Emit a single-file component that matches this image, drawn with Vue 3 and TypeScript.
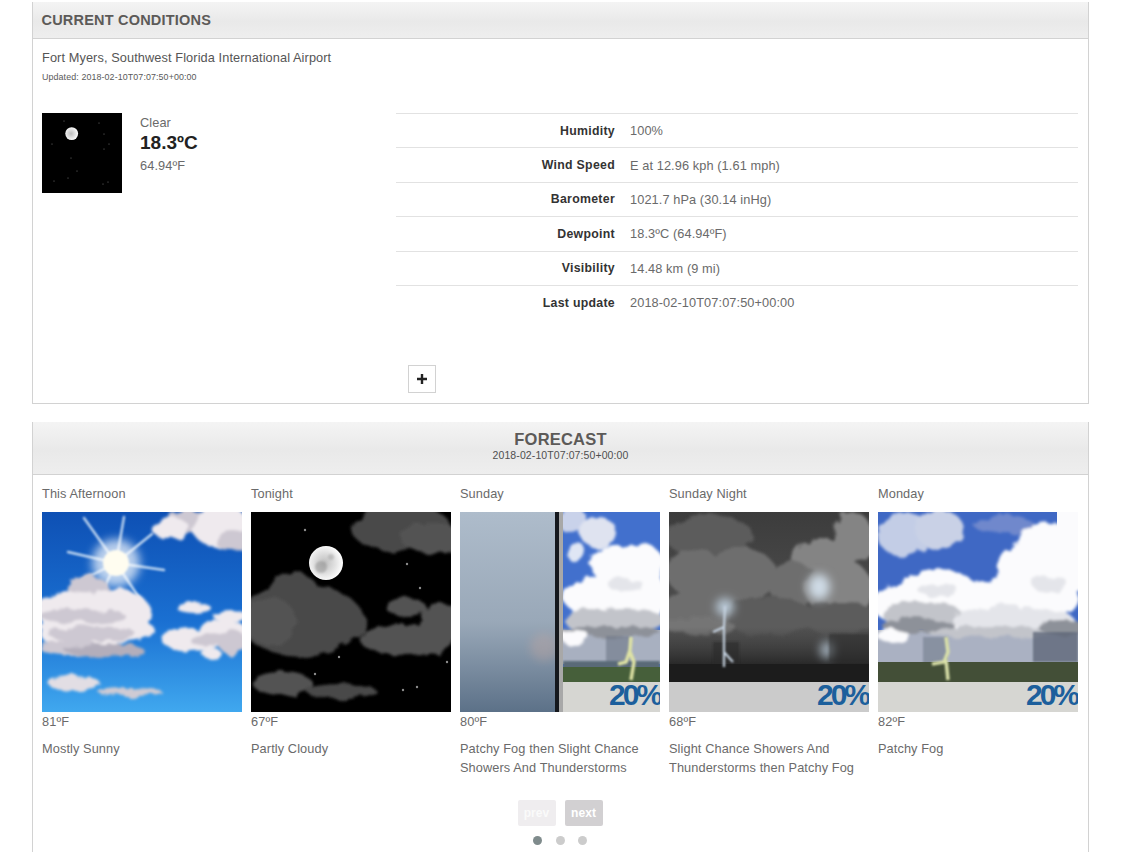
<script setup lang="ts">
type B = [number, number, number, number, string]

const rows = [
  ['Humidity', '100%'],
  ['Wind Speed', 'E at 12.96 kph (1.61 mph)'],
  ['Barometer', '1021.7 hPa (30.14 inHg)'],
  ['Dewpoint', '18.3ºC (64.94ºF)'],
  ['Visibility', '14.48 km (9 mi)'],
  ['Last update', '2018-02-10T07:07:50+00:00'],
]

const forecast = [
  { day: 'This Afternoon', temp: '81ºF', text: 'Mostly Sunny' },
  { day: 'Tonight', temp: '67ºF', text: 'Partly Cloudy' },
  { day: 'Sunday', temp: '80ºF', text: 'Patchy Fog then Slight Chance Showers And Thunderstorms' },
  { day: 'Sunday Night', temp: '68ºF', text: 'Slight Chance Showers And Thunderstorms then Patchy Fog' },
  { day: 'Monday', temp: '82ºF', text: 'Patchy Fog' },
]

const W = '#efeaee'
const G = '#cdc8d2'
const D = '#b3aebb'
const sunny: B[] = [
  [150, 10, 30, 12, G], [178, 14, 28, 22, W], [128, 16, 18, 12, W], [190, 28, 18, 10, G],
  [46, 76, 20, 13, G], [30, 100, 34, 20, W], [72, 100, 36, 24, W], [42, 120, 44, 20, W],
  [86, 118, 26, 12, W], [40, 104, 44, 7, G], [28, 136, 30, 8, G], [62, 138, 40, 6, D], [50, 122, 44, 8, G],
  [152, 96, 17, 5, W], [188, 104, 17, 6, W], [150, 128, 30, 12, W], [180, 122, 28, 14, W],
  [168, 128, 20, 6, G], [170, 142, 10, 5, W], [190, 130, 14, 12, G], [32, 171, 26, 7, '#e2dee4'], [88, 180, 32, 4, '#cfcbd4'],
]
const K = '#484848'
const L = '#525252'
const night: B[] = [
  [150, 16, 50, 24, K], [180, 26, 30, 16, L], [42, 78, 24, 18, K], [50, 108, 62, 36, K],
  [20, 110, 26, 24, L], [92, 112, 24, 18, K], [155, 95, 20, 9, L], [155, 128, 46, 16, L],
  [190, 104, 20, 12, L], [185, 120, 22, 12, L], [32, 172, 30, 11, L], [90, 179, 35, 7, K],
]
const nightStars: [number, number][] = [
  [54, 18], [156, 52], [169, 76], [88, 145], [64, 162], [152, 178], [166, 175], [196, 150],
]
const smallStars: [number, number][] = [
  [22, 8], [57, 10], [62, 21], [10, 31], [67, 31], [62, 36], [29, 45], [35, 58], [12, 68], [26, 65], [61, 71], [66, 69],
]
const sW = '#fbfbfd'
const sL = '#e4e5ea'
const sG = '#c2c4ca'
const sD = '#8d9199'
const stormDay: B[] = [
  [25, 22, 26, 22, '#c3cde6'], [62, 18, 24, 20, '#c9d1e6'], [125, 12, 30, 10, '#6f88cc'], [172, 50, 42, 40, sW], [148, 55, 26, 22, sW],
  [60, 88, 46, 30, sW], [18, 92, 24, 18, sW], [105, 90, 30, 22, sW], [150, 85, 50, 26, sW],
  [172, 72, 18, 8, sL], [60, 78, 20, 7, sL], [125, 96, 16, 6, sL],
  [45, 104, 40, 14, sG], [110, 108, 36, 12, sL], [150, 108, 46, 12, sL], [40, 114, 36, 8, sD], [120, 120, 70, 6, sG], [185, 116, 24, 8, sD],
  [15, 124, 16, 7, sW],
]
const leftStorm: B[] = [
  [112, 8, 14, 14, '#c9d2ea'], [138, 20, 18, 16, '#dfe3f0'], [116, 40, 10, 10, '#dfe6f4'], [180, 55, 24, 24, sW], [152, 52, 22, 18, sW],
  [150, 88, 42, 26, sW], [120, 84, 18, 14, sW], [190, 85, 18, 20, sW], [165, 72, 18, 6, sL], [165, 108, 40, 12, sG], [130, 108, 26, 12, sG], [150, 120, 50, 6, sD], [116, 126, 14, 8, sW],
]
const nC = '#6e6e6e'
const nL = '#848484'
const nD = '#5c5c5c'
const stormNight: B[] = [
  [40, 24, 44, 22, nD], [25, 60, 28, 24, nC], [70, 62, 38, 26, nC], [184, 26, 20, 26, nL], [152, 48, 28, 22, nL],
  [125, 72, 26, 22, nC], [170, 76, 34, 28, nL], [36, 100, 42, 24, nC], [100, 104, 44, 20, nD], [170, 106, 40, 16, nD],
  [30, 114, 36, 8, '#747474'],
]
</script>

<template>
  <main class="page">
    <svg class="defs" width="0" height="0" aria-hidden="true">
      <defs>
        <filter id="rag" x="-10%" y="-10%" width="120%" height="120%">
          <feTurbulence type="fractalNoise" baseFrequency="0.06" numOctaves="3" seed="4" />
          <feDisplacementMap in="SourceGraphic" scale="11" />
          <feGaussianBlur stdDeviation="1.5" />
        </filter>
        <filter id="soft" x="-60%" y="-60%" width="220%" height="220%">
          <feGaussianBlur stdDeviation="5" />
        </filter>
        <filter id="tiny" x="-40%" y="-40%" width="180%" height="180%">
          <feGaussianBlur stdDeviation="0.9" />
        </filter>
        <linearGradient id="sky" x1="0" y1="0" x2="0" y2="1">
          <stop offset="0" stop-color="#0e50b4" />
          <stop offset="0.55" stop-color="#1a70d2" />
          <stop offset="1" stop-color="#40a8ef" />
        </linearGradient>
        <linearGradient id="fog" x1="0" y1="0" x2="0" y2="1">
          <stop offset="0" stop-color="#aebccb" />
          <stop offset="0.55" stop-color="#99a8b8" />
          <stop offset="1" stop-color="#5c7188" />
        </linearGradient>
        <linearGradient id="dark" x1="0" y1="0" x2="0" y2="1">
          <stop offset="0" stop-color="#3c3c3c" />
          <stop offset="1" stop-color="#5a5a5a" />
        </linearGradient>
        <linearGradient id="dusk" x1="0" y1="0" x2="0" y2="1">
          <stop offset="0" stop-color="#333" stop-opacity="0" />
          <stop offset="1" stop-color="#222" stop-opacity="0.95" />
        </linearGradient>
        <radialGradient id="moon" cx="0.45" cy="0.5" r="0.55">
          <stop offset="0" stop-color="#bdbdbd" />
          <stop offset="0.65" stop-color="#e6e6e6" />
          <stop offset="1" stop-color="#ffffff" />
        </radialGradient>
      </defs>
    </svg>

    <section class="card">
      <header class="head head-left"><h2>CURRENT CONDITIONS</h2></header>
      <div class="current">
        <p class="place">Fort Myers, Southwest Florida International Airport</p>
        <p class="updated">Updated: 2018-02-10T07:07:50+00:00</p>
        <div class="split">
          <div class="now">
            <svg class="now-pic" viewBox="0 0 80 80">
              <rect width="80" height="80" fill="#000" />
              <circle v-for="(s, i) in smallStars" :key="i" :cx="s[0]" :cy="s[1]" r="0.5" fill="#8a8a8a" />
              <circle cx="29.7" cy="20.6" r="6.4" fill="url(#moon)" />
            </svg>
            <div class="now-text">
              <div>Clear</div>
              <div class="big">18.3ºC</div>
              <div>64.94ºF</div>
            </div>
          </div>
          <div class="details">
            <div v-for="r in rows" :key="r[0]" class="row">
              <b class="label">{{ r[0] }}</b>
              <span>{{ r[1] }}</span>
            </div>
            <button class="plus" type="button">
              <svg viewBox="0 0 12 12" width="12" height="12"><path d="M6 1v10M1 6h10" stroke="#222" stroke-width="2.4" /></svg>
            </button>
          </div>
        </div>
      </div>
    </section>

    <section class="card second">
      <header class="head head-center">
        <h2>FORECAST</h2>
        <p>2018-02-10T07:07:50+00:00</p>
      </header>
      <div class="forecast">
        <div class="days">
          <article v-for="(f, idx) in forecast" :key="f.day" class="day">
            <div class="day-name">{{ f.day }}</div>
            <svg v-if="idx === 0" class="pic" viewBox="0 0 200 200">
              <rect width="200" height="200" fill="url(#sky)" />
              <g stroke="#dcebf9" stroke-linecap="round" opacity="0.85" filter="url(#tiny)">
                <path d="M74 51L42 6M74 51L82 5M74 51L110 22M74 51L26 40M74 51L122 58M74 51L40 68M74 51L100 90M74 51L60 80" stroke-width="2.4" />
              </g>
              <circle cx="74" cy="51" r="24" fill="#fff" opacity="0.7" filter="url(#soft)" />
              <circle cx="74" cy="51" r="13" fill="#fffdf0" filter="url(#tiny)" />
              <g filter="url(#rag)">
                <ellipse v-for="(b, i) in sunny" :key="i" :cx="b[0]" :cy="b[1]" :rx="b[2]" :ry="b[3]" :fill="b[4]" />
              </g>
            </svg>

            <svg v-else-if="idx === 1" class="pic" viewBox="0 0 200 200">
              <rect width="200" height="200" fill="#000" />
              <g filter="url(#rag)">
                <ellipse v-for="(b, i) in night" :key="i" :cx="b[0]" :cy="b[1]" :rx="b[2]" :ry="b[3]" :fill="b[4]" />
              </g>
              <circle v-for="(s, i) in nightStars" :key="i" :cx="s[0]" :cy="s[1]" r="1.2" fill="#8c8c8c" />
              <circle cx="75" cy="51" r="17" fill="url(#moon)" />
              <circle cx="70" cy="55" r="6" fill="#8e8e8e" opacity="0.5" filter="url(#tiny)" />
              <circle cx="80" cy="45" r="3" fill="#a0a0a0" opacity="0.5" filter="url(#tiny)" />
            </svg>

            <svg v-else-if="idx === 2" class="pic" viewBox="0 0 200 200">
              <rect width="200" height="200" fill="#4270cd" />
              <rect x="103" y="118" width="97" height="34" fill="#a8b0c0" />
              <g filter="url(#rag)">
                <ellipse v-for="(b, i) in leftStorm" :key="i" :cx="b[0]" :cy="b[1]" :rx="b[2]" :ry="b[3]" :fill="b[4]" />
              </g>
              <rect x="146" y="124" width="24" height="30" fill="#6d7686" opacity="0.6" filter="url(#tiny)" />
              <rect x="103" y="149" width="97" height="8" fill="#5a6a78" filter="url(#tiny)" />
              <rect x="103" y="155" width="97" height="15" fill="#465f3a" />
              <path d="M171 125L170 138L166 150L158 152M170 140L174 150L171 168" fill="none" stroke="#dfe3a4" stroke-width="3.5" filter="url(#tiny)" />
              <rect x="103" y="170" width="97" height="30" fill="#d6d6d2" />
              <rect x="0" y="0" width="95" height="200" fill="url(#fog)" />
              <ellipse cx="84" cy="135" rx="14" ry="14" fill="#c8a8a0" opacity="0.35" filter="url(#soft)" />
              <rect x="95" y="0" width="4" height="200" fill="#15181d" />
              <rect x="99" y="0" width="4" height="200" fill="#a8a8a8" />
              <text class="pct" x="200" y="193" text-anchor="end">20%</text>
            </svg>

            <svg v-else-if="idx === 3" class="pic" viewBox="0 0 200 200">
              <rect width="200" height="170" fill="url(#dark)" />
              <g filter="url(#rag)">
                <ellipse v-for="(b, i) in stormNight" :key="i" :cx="b[0]" :cy="b[1]" :rx="b[2]" :ry="b[3]" :fill="b[4]" />
              </g>
              <ellipse cx="150" cy="75" rx="11" ry="13" fill="#cfdbe6" filter="url(#soft)" />
              <ellipse cx="56" cy="95" rx="9" ry="9" fill="#b8c8d6" filter="url(#soft)" />
              <rect y="115" width="200" height="40" fill="url(#dusk)" />
              <ellipse cx="158" cy="138" rx="7" ry="9" fill="#b8c8d6" opacity="0.8" filter="url(#soft)" />
              <rect x="44" y="130" width="26" height="24" fill="#2c2c2c" opacity="0.6" filter="url(#tiny)" />
              <rect x="160" y="122" width="40" height="28" fill="#2c2c2c" opacity="0.5" filter="url(#tiny)" />
              <rect y="152" width="200" height="18" fill="#1c1c1c" />
              <path d="M56 94L55 115L44 120M55 115L55 155M55 140L64 150" fill="none" stroke="#c5d2e0" stroke-width="2.2" filter="url(#tiny)" />
              <path d="M158 128L158 145" stroke="#d8e4ee" stroke-width="3" filter="url(#tiny)" />
              <rect y="170" width="200" height="30" fill="#cbcbcb" />
              <text class="pct" x="199" y="193" text-anchor="end">20%</text>
            </svg>

            <svg v-else class="pic" viewBox="0 0 200 200">
              <rect width="200" height="200" fill="#3f68c4" />
              <rect y="118" width="200" height="34" fill="#aab1c2" />
              <g filter="url(#rag)">
                <ellipse v-for="(b, i) in stormDay" :key="i" :cx="b[0]" :cy="b[1]" :rx="b[2]" :ry="b[3]" :fill="b[4]" />
              </g>
              <rect x="179" y="0" width="21" height="30" fill="#fbfbfd" />
              <rect x="45" y="125" width="24" height="28" fill="#737c8c" opacity="0.6" filter="url(#tiny)" />
              <rect x="155" y="120" width="45" height="30" fill="#5a6474" opacity="0.75" filter="url(#tiny)" />
              <rect y="150" width="200" height="20" fill="#434f37" />
              <path d="M68 125L70 140L66 150L54 152M68 148L70 168" fill="none" stroke="#d9e0a8" stroke-width="3.5" filter="url(#tiny)" />
              <path d="M170 127L170 150" stroke="#a9c08c" stroke-width="3" filter="url(#tiny)" />
              <rect y="170" width="200" height="30" fill="#d6d6d2" />
              <text class="pct" x="199" y="193" text-anchor="end">20%</text>
            </svg>

            <div class="temp">{{ f.temp }}</div>
            <div class="desc">{{ f.text }}</div>
          </article>
        </div>
        <div class="pager">
          <span class="btn off">prev</span>
          <span class="btn">next</span>
        </div>
        <div class="dots">
          <i class="dot active"></i><i class="dot"></i><i class="dot"></i>
        </div>
      </div>
    </section>
  </main>
</template>

<style scoped>
.page {
  padding: 2px 47px 0 32px;
  font-family: "Liberation Sans", Arial, sans-serif;
  font-size: 12.75px;
  color: #555;
  letter-spacing: 0.1px;
}
.defs { display: block; }
.card {
  border: 1px solid #d2d2d2;
  border-top: 0;
  background: #fff;
}
.second { margin-top: 18px; padding-bottom: 30px; }
.head {
  background: linear-gradient(#f4f4f4, #e9e9e9 55%, #eeeeee);
  border-bottom: 1px solid #d2d2d2;
  color: #5c5a58;
}
h2 { margin: 0; font-size: 14.5px; font-weight: 700; letter-spacing: 0.2px; }
.head-left { height: 37px; padding: 10px 8.5px 0; box-sizing: border-box; }
.head-center { height: 53px; padding-top: 9px; box-sizing: border-box; text-align: center; }
.head-center h2 { font-size: 16.5px; line-height: 17px; }
.head-center p { margin: 1px 0 0; font-size: 10.5px; line-height: 13px; color: #4f4f4f; }
.current { padding: 11px 10px 9px 9px; height: 364px; box-sizing: border-box; }
.place { margin: 0; line-height: 16px; color: #555; }
.updated { margin: 6px 0 0; font-size: 8.9px; line-height: 10px; color: #5a5a5a; }
.split { display: flex; margin-top: 31px; }
.now { width: 354px; display: flex; flex: none; align-items: flex-start; }
.now-pic { width: 80px; height: 80px; display: block; }
.now-text { margin-left: 18px; line-height: 16px; margin-top: 2px; color: #6a6a6a; }
.big { font-size: 19px; font-weight: 700; color: #222; line-height: 24px; letter-spacing: 0; margin-bottom: 3px; }
.details { flex: 1; }
.row {
  display: flex;
  height: 34.4px;
  box-sizing: border-box;
  border-top: 1px solid #e2e2e2;
  align-items: center;
  color: #6a6a6a;
}
.label { width: 219px; text-align: right; margin-right: 15px; color: #333; font-size: 12.3px; letter-spacing: 0.3px; }
.plus {
  display: flex;
  align-items: center;
  justify-content: center;
  width: 28px;
  height: 28px;
  margin: 46px 0 0 12px;
  padding: 0;
  border: 1px solid #d2d2d2;
  background: #fff;
}
.forecast { padding: 11px 10px 0 9px; }
.days { display: flex; gap: 9px; }
.day { width: 200px; flex: none; }
.day-name { line-height: 16px; margin-bottom: 10px; color: #6a6a6a; }
.pic { display: block; width: 200px; height: 200px; }
.temp { line-height: 16px; margin-top: 2px; color: #6a6a6a; }
.desc { margin-top: 10px; line-height: 18.7px; min-height: 38px; color: #6a6a6a; }
.pct { font: 700 30px "Liberation Sans", Arial, sans-serif; letter-spacing: -3px; fill: #1c5f9c; }
.pager { display: flex; justify-content: center; gap: 9px; margin-top: 22px; }
.btn {
  width: 38px;
  height: 26px;
  line-height: 26px;
  text-align: center;
  font-weight: 700;
  color: #fff;
  background: #d2d0d2;
  border-radius: 2px;
  font-size: 12px;
}
.off { background: #efedef; color: #fafafa; }
.dots { display: flex; justify-content: center; gap: 13.5px; margin-top: 9.5px; }
.dot { width: 9px; height: 9px; border-radius: 50%; background: #ccc; }
.active { background: #7f8b8c; }
</style>

<style>
html, body { overflow: hidden; background: #fff; }
</style>
